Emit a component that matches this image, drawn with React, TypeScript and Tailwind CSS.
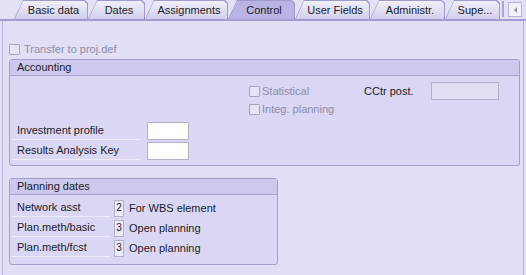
import React from 'react';

const tabs = [
  { label: 'Basic data', w: 'w-[74px]' },
  { label: 'Dates', w: 'w-[57px]' },
  { label: 'Assignments', w: 'w-[83px]' },
  { label: 'Control', w: 'w-[67px]', active: true },
  { label: 'User Fields', w: 'w-[75px]' },
  { label: 'Administr.', w: 'w-[75px]' },
  { label: 'Supe...', w: 'w-[55px]' },
];

const Checkbox = () => (
  <span className="inline-block w-[11px] h-[11px] border border-[#a5a3bd] bg-[#e6e4f6] rounded-[1px]" />
);

const Label = ({ text, w }: { text: string; w: string }) => (
  <div className={`${w} h-[18px] flex items-center pl-[5px] border-b border-[#ebe9fa] text-[#1b1b2b]`}>
    {text}
  </div>
);

const GroupBox = ({ title, className, children }: { title: string; className: string; children: React.ReactNode }) => (
  <div className={`border border-[#a29ec9] rounded-[3px] bg-[#d9d7f3] ${className}`}>
    <div className="h-[16px] flex items-center pl-[7px] bg-[#cdc9ec] border-b border-[#a7a3cf] text-[#1b1b2b]">
      {title}
    </div>
    {children}
  </div>
);

export default function App() {
  return (
    <div className="w-[526px] h-[275px] bg-[#e1dff5] overflow-hidden text-[11px] leading-none font-['Liberation_Sans',Arial,sans-serif] text-[#1b1b2b]">
      {/* Tab strip */}
      <div className="relative h-[21px] flex items-end pl-[14px] border-b-2 border-[#a19dd3] bg-[#e3e1f6]">
        {tabs.map((tab) => (
          <div
            key={tab.label}
            className={`${tab.w} h-[19px] bg-[#9e9aca] [clip-path:polygon(0_100%,9px_0,calc(100%-3px)_0,100%_3px,100%_100%)] pt-px pr-px`}
          >
            <div
              className={`h-full flex items-center justify-center pl-[10px] pr-[4px] [clip-path:polygon(0_110%,9px_0,calc(100%-3px)_0,100%_3px,100%_110%)] ${
                tab.active
                  ? 'bg-[#b9b4e3]'
                  : 'bg-gradient-to-b from-[#f0eff9] to-[#d2cfec]'
              }`}
            >
              {tab.label}
            </div>
          </div>
        ))}
        <div className="ml-[2px] mb-[2px] w-[2px] h-[16px] border-l border-r border-[#a9a5d6]" />
        <div className="ml-[4px] mb-[2px] w-[14px] h-[15px] border border-[#b7b5d0] bg-[#f2f1fa] flex items-center justify-center">
          <span className="w-0 h-0 border-y-[3px] border-y-transparent border-r-[3px] border-r-[#8f8ca8]" />
        </div>
      </div>

      {/* Page */}
      <div className="h-[254px] mx-[2px] border-x border-[#b9b6d9] px-[6px] pt-[22px]">
        <div className="flex items-center gap-[4px] text-[#8e8ca8] h-[12px]">
          <Checkbox />
          <span>Transfer to proj.def</span>
        </div>

        <GroupBox title="Accounting" className="mt-[4px] h-[107px] w-[511px]">
          <div className="h-[90px]">
            <div className="flex items-center h-[18px] mt-[6px] pl-[239px]">
              <Checkbox />
              <span className="ml-[2px] w-[102px] text-[#8e8ca8]">Statistical</span>
              <span className="w-[67px]">CCtr post.</span>
              <span className="w-[68px] h-[18px] border border-[#b3b1c9] bg-[#e1dff3]" />
            </div>
            <div className="flex items-center h-[18px] pl-[239px]">
              <Checkbox />
              <span className="ml-[2px] text-[#8e8ca8]">Integ. planning</span>
            </div>
            <div className="mt-[4px] pl-[2px] flex items-center gap-[8px]">
              <Label text="Investment profile" w="w-[127px]" />
              <span className="w-[42px] h-[18px] border border-[#b3b1c9] bg-white" />
            </div>
            <div className="mt-[2px] pl-[2px] flex items-center gap-[8px]">
              <Label text="Results Analysis Key" w="w-[127px]" />
              <span className="w-[42px] h-[18px] border border-[#b3b1c9] bg-white" />
            </div>
          </div>
        </GroupBox>

        <GroupBox title="Planning dates" className="mt-[12px] h-[87px] w-[269px]">
          <div className="pt-[4px] pl-[2px] flex flex-col gap-[2px]">
            {[
              ['Network asst', '2', 'For WBS element'],
              ['Plan.meth/basic', '3', 'Open planning'],
              ['Plan.meth/fcst', '3', 'Open planning'],
            ].map(([label, val, desc]) => (
              <div key={label} className="flex items-center h-[18px]">
                <Label text={label} w="w-[98px]" />
                <span className="ml-[4px] w-[10px] h-[17px] border border-[#b3b1c9] bg-[#ecebf7] flex items-center justify-center text-[10px]">
                  {val}
                </span>
                <span className="ml-[5px]">{desc}</span>
              </div>
            ))}
          </div>
        </GroupBox>
      </div>
    </div>
  );
}
